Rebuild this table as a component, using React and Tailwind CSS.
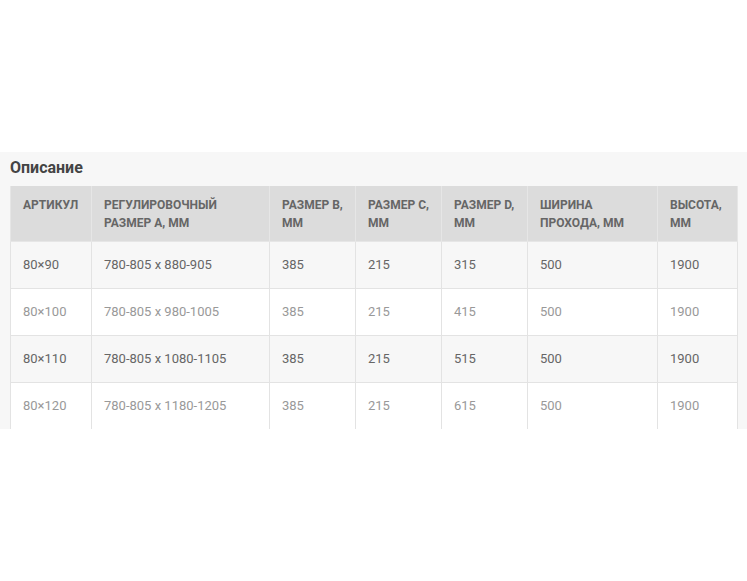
import React from "react";

const headers = [
  "Артикул",
  "Регулировочный размер A, мм",
  "Размер B, мм",
  "Размер C, мм",
  "Размер D, мм",
  "Ширина прохода, мм",
  "Высота, мм",
];

const rows = [
  ["80×90", "780-805 x 880-905", "385", "215", "315", "500", "1900"],
  ["80×100", "780-805 x 980-1005", "385", "215", "415", "500", "1900"],
  ["80×110", "780-805 x 1080-1105", "385", "215", "515", "500", "1900"],
  ["80×120", "780-805 x 1180-1205", "385", "215", "615", "500", "1900"],
];

const widths = [81, 178, 86, 86, 86, 130, 80];

export default function App() {
  return (
    <div className="w-[747px] h-[581px] bg-white" style={{ fontFamily: "Roboto, 'Noto Sans', sans-serif" }}>
      <div className="h-[152px]" />
      <div className="h-[277px] overflow-hidden bg-[#f7f7f7] px-[10px]">
        <div className="pt-[6px] mb-[8px] h-[26px] leading-[20px] text-[16px] font-bold text-[#444]">Описание</div>
        <table className="table-fixed border-collapse w-[727px]">
          <colgroup>
            {widths.map((w, i) => (
              <col key={i} style={{ width: w }} />
            ))}
          </colgroup>
          <thead>
            <tr className="bg-[#dcdcdc]">
              {headers.map((h, i) => (
                <th
                  key={i}
                  className="h-[55px] align-top text-left uppercase font-bold text-[12px] leading-[18px] text-[#666] pl-[12px] pr-[8px] pt-[10px] border border-[#e6e6e6] border-t-0"
                >
                  {h}
                </th>
              ))}
            </tr>
          </thead>
          <tbody>
            {rows.map((r, ri) => (
              <tr key={ri} className={ri % 2 === 0 ? "bg-[#f7f7f7] text-[#666]" : "bg-white text-[#999]"}>
                {r.map((c, ci) => (
                  <td
                    key={ci}
                    className="h-[47px] align-middle text-[13px] leading-[18px] pl-[12px] border border-[#e3e3e3] whitespace-nowrap"
                  >
                    {c}
                  </td>
                ))}
              </tr>
            ))}
          </tbody>
        </table>
      </div>
    </div>
  );
}
